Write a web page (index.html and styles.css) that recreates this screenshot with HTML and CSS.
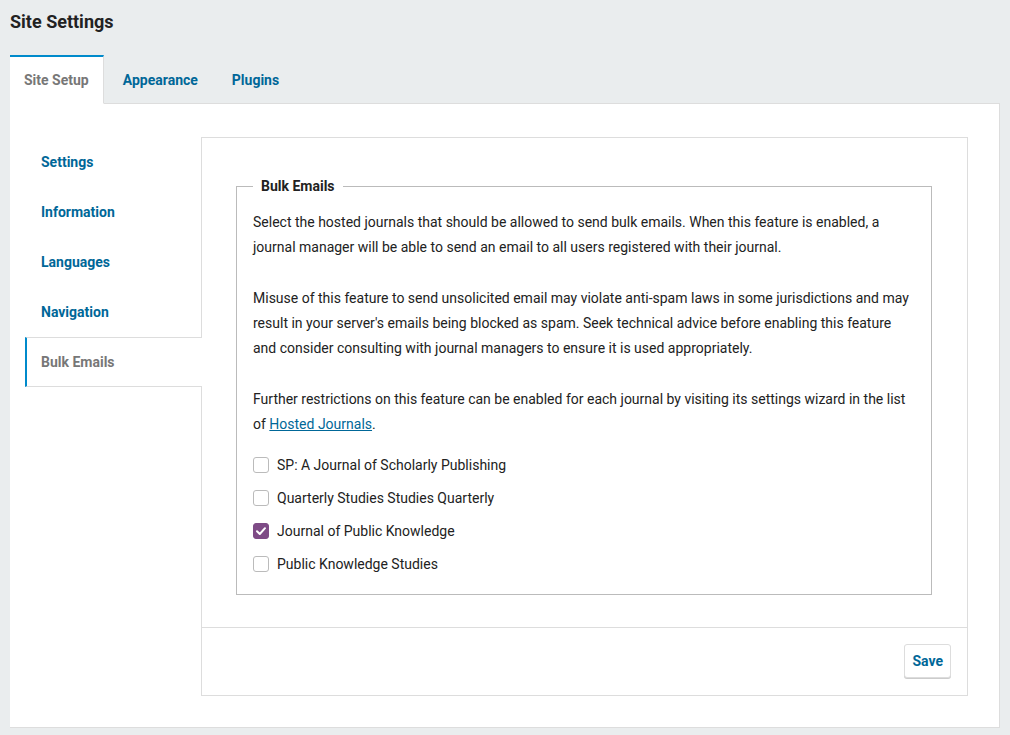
FILE: index.html
```html
<!DOCTYPE html>
<html lang="en">
<head>
<meta charset="utf-8">
<title>Site Settings</title>
<link rel="stylesheet" href="styles.css">
</head>
<body>
<div class="page">
  <h1 class="title">Site Settings</h1>
  <div class="tabs">
    <a class="tab tab-active">Site Setup</a>
    <a class="tab tab-first">Appearance</a>
    <a class="tab">Plugins</a>
  </div>
  <div class="panel">
    <nav class="sidenav">
      <a class="navitem">Settings</a>
      <a class="navitem">Information</a>
      <a class="navitem">Languages</a>
      <a class="navitem">Navigation</a>
      <a class="navitem navitem-active">Bulk Emails</a>
    </nav>
    <div class="content">
      <div class="form-body">
        <fieldset class="fieldset">
          <legend class="legend">Bulk Emails</legend>
          <p class="para">Select the hosted journals that should be allowed to send bulk emails. When this feature is enabled, a journal manager will be able to send an email to all users registered with their journal.</p>
          <p class="para">Misuse of this feature to send unsolicited email may violate anti-spam laws in some jurisdictions and may result in your server's emails being blocked as spam. Seek technical advice before enabling this feature and consider consulting with journal managers to ensure it is used appropriately.</p>
          <p class="para">Further restrictions on this feature can be enabled for each journal by visiting its settings wizard in the list of <a class="link">Hosted Journals</a>.</p>
          <div class="checks">
            <label class="check"><span class="box"></span>SP: A Journal of Scholarly Publishing</label>
            <label class="check"><span class="box"></span>Quarterly Studies Studies Quarterly</label>
            <label class="check"><span class="box box-on"><svg width="16" height="16" viewBox="0 0 16 16"><path d="M4 8.3 L6.8 11 L12 5.2" fill="none" stroke="#fff" stroke-width="2" stroke-linecap="round" stroke-linejoin="round"/></svg></span>Journal of Public Knowledge</label>
            <label class="check"><span class="box"></span>Public Knowledge Studies</label>
          </div>
        </fieldset>
      </div>
      <div class="footer">
        <button class="save">Save</button>
      </div>
    </div>
  </div>
</div>
</body>
</html>
```
FILE: styles.css
```css
* { box-sizing: border-box; }
html, body { margin: 0; padding: 0; }
body {
  background: #eaedee;
  font-family: Roboto, "Noto Sans", sans-serif;
  color: #222;
  font-size: 14px;
}
.page {
  padding: 11px 10px 8px 10px;
}
.title {
  margin: 0;
  font-size: 18px;
  line-height: 22px;
  font-weight: 700;
  color: #222;
}
.tabs {
  display: flex;
  margin-top: 22px;
  height: 49px;
}
.tab {
  display: flex;
  align-items: center;
  padding: 0 17px;
  font-weight: 700;
  font-size: 14px;
  color: #006798;
  border-top: 2px solid transparent;
  border-bottom: 1px solid #ddd;
}
.tab-active {
  background: #fff;
  color: #777;
  padding: 0 14px;
  border-top: 2px solid #008acb;
  border-right: 1px solid #ddd;
  border-bottom: 1px solid #fff;
}
.tab-first { padding-left: 19px; }
.tabs::after {
  content: "";
  flex: 1;
  border-bottom: 1px solid #ddd;
}
.panel {
  background: #fff;
  display: flex;
  padding: 33px 31px 31px 15px;
  border-right: 1px solid #ddd;
  border-bottom: 1px solid #ddd;
  height: 624px;
}
.sidenav {
  width: 176px;
  display: flex;
  flex-direction: column;
  position: relative;
  z-index: 1;
}
.navitem {
  height: 50px;
  display: flex;
  align-items: center;
  padding-left: 16px;
  font-weight: 700;
  color: #006798;
}
.navitem-active {
  color: #777;
  background: #fff;
  border-top: 1px solid #ddd;
  border-bottom: 1px solid #ddd;
  border-left: 2px solid #008acb;
  padding-left: 14px;
  margin-right: -1px;
}
.content {
  flex: 1;
  border: 1px solid #ddd;
  display: flex;
  flex-direction: column;
}
.form-body {
  padding: 39px 35px 32px 34px;
  border-bottom: 1px solid #ddd;
}
.fieldset {
  margin: 0;
  border: 1px solid #bbb;
  padding: 15px 16px 13px 16px;
}
.legend {
  padding: 0 8px;
  font-weight: 700;
  font-size: 14px;
  line-height: 18px;
  color: #222;
}
.para {
  margin: 0 0 26px 0;
  line-height: 25px;
  font-size: 14px;
}
.para:nth-of-type(3) { margin-bottom: 11px; }
.link {
  color: #006798;
  text-decoration: underline;
}
.checks {
  display: flex;
  flex-direction: column;
}
.check {
  display: flex;
  align-items: center;
  height: 33px;
  font-size: 14px;
}
.check:last-child { height: 34px; }
.box {
  width: 16px;
  height: 16px;
  border: 1px solid #bbb;
  border-radius: 3px;
  margin-right: 8px;
  display: flex;
}
.box-on {
  background: #7e4b86;
  border-color: #7e4b86;
}
.box-on svg { margin: -1px; }
.footer {
  display: flex;
  justify-content: flex-end;
  padding: 16px 16px 15px 16px;
}
.save {
  height: 34px;
  padding: 0 7px;
  background: #fff;
  border: 1px solid #ddd;
  border-radius: 3px;
  box-shadow: 0 1px 0 #ccc;
  font-family: Roboto, "Noto Sans", sans-serif;
  font-weight: 700;
  font-size: 14px;
  color: #006798;
}
```
